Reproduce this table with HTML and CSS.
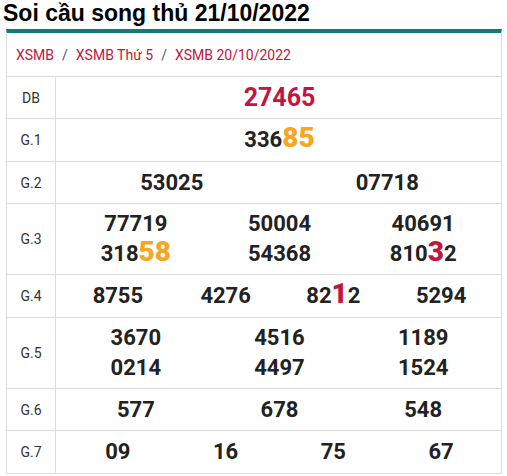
FILE: index.html
```html
<!DOCTYPE html>
<html lang="vi">
<head>
<meta charset="utf-8">
<title>Soi cầu song thủ 21/10/2022</title>
<link rel="stylesheet" href="styles.css">
</head>
<body>
<h1 class="title">Soi cầu song thủ 21/10/2022</h1>
<div class="card">
  <div class="crumbs">
    <a class="crumb">XSMB</a><span class="sep">/</span><a class="crumb">XSMB Thứ 5</a><span class="sep">/</span><a class="crumb">XSMB 20/10/2022</a>
  </div>
  <table class="results">
    <tr>
      <td class="lbl">DB</td>
      <td class="data"><div class="nums c1"><span class="num db">27465</span></div></td>
    </tr>
    <tr>
      <td class="lbl">G.1</td>
      <td class="data"><div class="nums c1 tall"><span class="num">336<b class="hl-o">85</b></span></div></td>
    </tr>
    <tr>
      <td class="lbl">G.2</td>
      <td class="data"><div class="nums c2"><span class="num">53025</span><span class="num">07718</span></div></td>
    </tr>
    <tr>
      <td class="lbl">G.3</td>
      <td class="data"><div class="nums c3">
        <span class="num">77719</span><span class="num">50004</span><span class="num">40691</span>
        <span class="num">318<b class="hl-o">58</b></span><span class="num">54368</span><span class="num">810<b class="hl-r">3</b>2</span>
      </div></td>
    </tr>
    <tr>
      <td class="lbl">G.4</td>
      <td class="data"><div class="nums c4 tall">
        <span class="num">8755</span><span class="num">4276</span><span class="num">82<b class="hl-r">1</b>2</span><span class="num">5294</span>
      </div></td>
    </tr>
    <tr>
      <td class="lbl">G.5</td>
      <td class="data"><div class="nums c3">
        <span class="num">3670</span><span class="num">4516</span><span class="num">1189</span>
        <span class="num">0214</span><span class="num">4497</span><span class="num">1524</span>
      </div></td>
    </tr>
    <tr>
      <td class="lbl">G.6</td>
      <td class="data"><div class="nums c3"><span class="num">577</span><span class="num">678</span><span class="num">548</span></div></td>
    </tr>
    <tr>
      <td class="lbl">G.7</td>
      <td class="data"><div class="nums c4 tall"><span class="num">09</span><span class="num">16</span><span class="num">75</span><span class="num">67</span></div></td>
    </tr>
  </table>
</div>
</body>
</html>
```
FILE: styles.css
```css
html, body {
  margin: 0;
  padding: 0;
  background: #fff;
}
body {
  font-family: Roboto, "Liberation Sans", Arial, sans-serif;
  color: #222;
}
.title {
  margin: 0;
  padding: 0 0 0 3px;
  height: 29px;
  font-family: "Liberation Sans", Arial, sans-serif;
  font-size: 23px;
  font-weight: bold;
  line-height: 27px;
  color: #000;
}
.card {
  margin: 0 5px 0 6px;
  border-top: 4px solid #107b7c;
  border-left: 1px solid #dcdcdc;
  border-right: 1px solid #dcdcdc;
}
.crumbs {
  height: 43px;
  display: flex;
  align-items: center;
  padding-left: 9px;
  font-size: 14px;
}
.crumb {
  color: #c3153d;
  text-decoration: none;
}
.sep {
  color: #555;
  margin: 0 8px;
}
.results {
  width: calc(100% + 2px);
  margin-left: -1px;
  border-collapse: collapse;
  table-layout: fixed;
}
.results td {
  border: 1px solid #dcdcdc;
}
.lbl {
  width: 48px;
  text-align: center;
  font-size: 14px;
  color: #333;
  padding: 0;
}
.data {
  padding: 5px 6px 5px 8px;
}
.nums {
  display: grid;
  justify-items: center;
  align-items: center;
  min-height: 31px;
}
.nums.tall {
  min-height: 32px;
}
.c1 { grid-template-columns: 1fr; }
.c2 { grid-template-columns: repeat(2, 1fr); }
.c3 { grid-template-columns: repeat(3, 1fr); }
.c4 { grid-template-columns: repeat(4, 1fr); }
.num {
  font-size: 22px;
  font-weight: bold;
  line-height: 30px;
  height: 30px;
  color: #222;
}
.num.db {
  font-size: 25px;
  color: #c3153d;
}
.hl-o, .hl-r {
  font-size: 28px;
  line-height: 24px;
}
.hl-o { color: #f6a623; }
.hl-r { color: #c3153d; }
```
